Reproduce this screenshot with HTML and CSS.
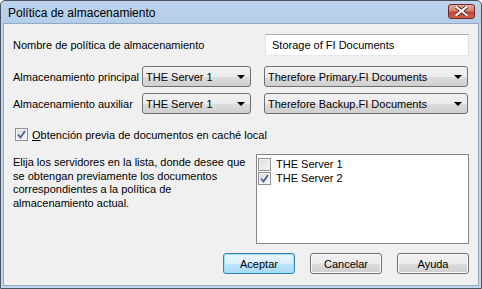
FILE: index.html
```html
<!DOCTYPE html>
<html lang="es">
<head>
    <meta charset="UTF-8">
    <title>Política de almacenamiento</title>
    <link rel="stylesheet" href="styles.css">
</head>
<body>
    <div class="window">
        <div class="titlebar">
            <span class="title">Política de almacenamiento</span>
            <span class="close-btn">
                <svg width="13" height="10" viewBox="0 0 13 10">
                    <path d="M1.5 1 L11.5 9 M11.5 1 L1.5 9" stroke="#5a2020" stroke-width="4" stroke-linecap="square"/>
                    <path d="M1.5 1 L11.5 9 M11.5 1 L1.5 9" stroke="#ffffff" stroke-width="2.2" stroke-linecap="square"/>
                </svg>
            </span>
        </div>

        <div class="content">
            <div class="row row-name">
                <span class="label">Nombre de política de almacenamiento</span>
                <div class="textbox">Storage of FI Documents</div>
            </div>

            <div class="row row-combo">
                <span class="label">Almacenamiento principal</span>
                <div class="combo combo-small"><span>THE Server 1</span><i class="arrow"></i></div>
                <div class="combo combo-large"><span>Therefore Primary.FI Dcouments</span><i class="arrow"></i></div>
            </div>

            <div class="row row-combo second">
                <span class="label">Almacenamiento auxiliar</span>
                <div class="combo combo-small"><span>THE Server 1</span><i class="arrow"></i></div>
                <div class="combo combo-large"><span>Therefore Backup.FI Documents</span><i class="arrow"></i></div>
            </div>

            <div class="check-row">
                <span class="checkbox checked">
                    <svg width="9" height="9" viewBox="0 0 9 9"><path d="M1 4.5 L3.5 7.5 L8 1" fill="none" stroke="#4a5f97" stroke-width="1.8"/></svg>
                </span>
                <span><u>O</u>btención previa de documentos en caché local</span>
            </div>

            <div class="servers">
                <p class="hint">Elija los servidores en la lista, donde desee que<br>se obtengan previamente los documentos<br>correspondientes a la política de<br>almacenamiento actual.</p>
                <div class="listbox">
                    <div class="list-item">
                        <span class="checkbox"></span>
                        <span>THE Server 1</span>
                    </div>
                    <div class="list-item">
                        <span class="checkbox checked">
                            <svg width="9" height="9" viewBox="0 0 9 9"><path d="M1 4.5 L3.5 7.5 L8 1" fill="none" stroke="#4a5f97" stroke-width="1.8"/></svg>
                        </span>
                        <span>THE Server 2</span>
                    </div>
                </div>
            </div>

            <div class="buttons">
                <button class="btn default">Aceptar</button>
                <button class="btn">Cancelar</button>
                <button class="btn">Ayuda</button>
            </div>
        </div>
    </div>
</body>
</html>
```

FILE: styles.css
```css
body {
    margin: 0;
    width: 482px;
    height: 289px;
    overflow: hidden;
    font-family: 'Liberation Sans', Arial, sans-serif;
    font-size: 11px;
    color: #000;
}

.window {
    box-sizing: border-box;
    width: 482px;
    height: 289px;
    border: 1px solid #4a5460;
    border-radius: 5px 5px 0 0;
    background: linear-gradient(#bcd3ec 0px, #b4cde9 22px, #c3d8ee 23px, #c3d8ee 100%);
    padding: 0 2px 2px 2px;
    display: flex;
    flex-direction: column;
}

.titlebar {
    height: 22px;
    display: flex;
    align-items: center;
    justify-content: space-between;
    padding: 0 4px 0 5px;
}

.title {
    font-size: 12px;
    color: #000;
    margin-top: 1px;
}

.close-btn {
    box-sizing: border-box;
    width: 27px;
    height: 15px;
    margin-top: -2px;
    border: 1px solid #6d2a2a;
    border-radius: 3px;
    background: linear-gradient(#e9a99a 0%, #d97f6c 45%, #c8452f 55%, #d0604a 100%);
    display: flex;
    align-items: center;
    justify-content: center;
}

.content {
    flex: 1;
    background: #f0f0f0;
    border: 1px solid #93a8c1;
    padding: 10px 9px 0 9px;
}

.row {
    display: flex;
    align-items: center;
}

.row-name {
    height: 22px;
    justify-content: space-between;
}

.row-combo {
    height: 21px;
    margin-top: 10px;
}

.row-combo.second {
    margin-top: 6px;
}

.row-combo .label {
    width: 129px;
    flex-shrink: 0;
}

.textbox {
    box-sizing: border-box;
    width: 204px;
    height: 22px;
    background: #fff;
    border: 1px solid #e3e9ef;
    border-top-color: #abadb3;
    border-left-color: #e2e3ea;
    border-right-color: #dbdfe6;
    padding: 0 6px;
    line-height: 20px;
}

.combo {
    box-sizing: border-box;
    height: 21px;
    border: 1px solid #707070;
    border-radius: 3px;
    background: linear-gradient(#f2f2f2 0%, #ebebeb 50%, #dddddd 50%, #cfcfcf 100%);
    display: flex;
    align-items: center;
    justify-content: space-between;
    padding: 0 5px 0 3px;
}

.combo-small {
    width: 109px;
}

.combo-large {
    width: 204px;
    margin-left: 13px;
}

.arrow {
    width: 0;
    height: 0;
    border-left: 4px solid transparent;
    border-right: 4px solid transparent;
    border-top: 4px solid #000;
    margin-top: 1px;
}

.check-row {
    display: flex;
    align-items: center;
    gap: 4px;
    margin-top: 14px;
    padding-left: 2px;
    height: 13px;
}

.checkbox {
    box-sizing: border-box;
    width: 13px;
    height: 13px;
    border: 1px solid #8f8f8f;
    background: linear-gradient(135deg, #dcdcdc, #f6f6f6);
    box-shadow: inset 0 0 0 1px #f4f4f4;
    display: flex;
    align-items: center;
    justify-content: center;
    flex-shrink: 0;
}

.servers {
    display: flex;
    justify-content: space-between;
    margin-top: 13px;
}

.hint {
    margin: 2px 0 0 0;
    line-height: 13.5px;
}

.listbox {
    box-sizing: border-box;
    width: 213px;
    height: 90px;
    background: #fff;
    border: 1px solid #828790;
    padding: 2px 1px;
}

.list-item {
    display: flex;
    align-items: center;
    gap: 5px;
    height: 14px;
}

.buttons {
    display: flex;
    justify-content: flex-end;
    gap: 15px;
    margin-top: 9px;
}

.btn {
    box-sizing: border-box;
    width: 72px;
    height: 21px;
    font-family: 'Liberation Sans', Arial, sans-serif;
    font-size: 11px;
    color: #000;
    border: 1px solid #707070;
    border-radius: 3px;
    background: linear-gradient(#f2f2f2 0%, #ebebeb 50%, #dddddd 50%, #cfcfcf 100%);
    box-shadow: inset 0 0 0 1px #fbfbfb;
    padding: 0;
}

.btn.default {
    border-color: #3c7fb1;
    background: linear-gradient(#eaf6fd 0%, #d9f0fc 50%, #bee6fd 50%, #a7d9f5 100%);
    box-shadow: inset 0 0 0 1px #9de0fb;
}
```
